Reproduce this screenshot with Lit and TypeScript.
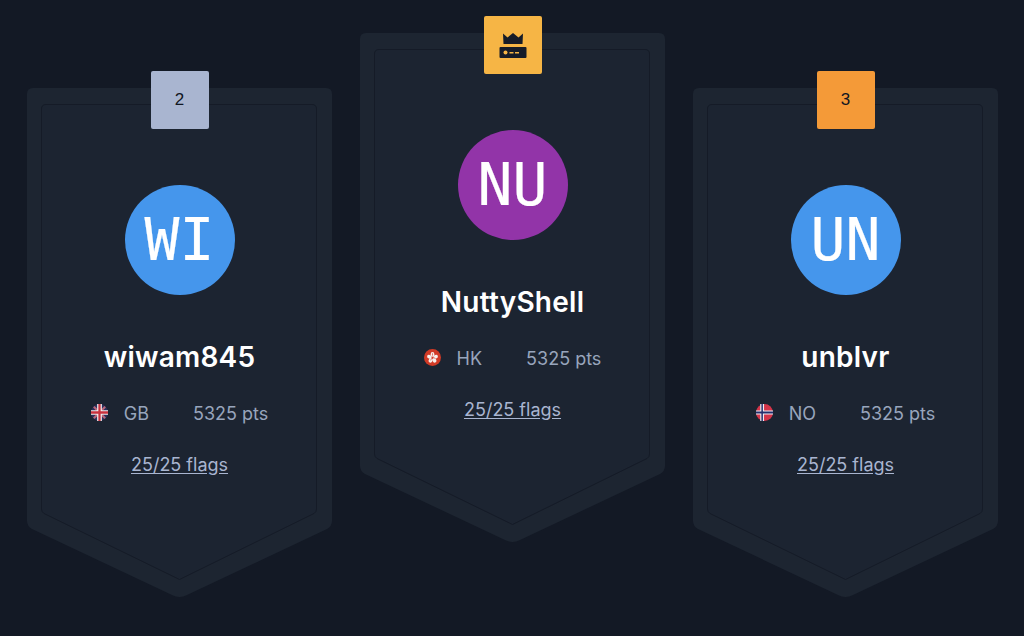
import { LitElement, html, css, svg } from "lit";
import { customElement, property } from "lit/decorators.js";

const flags: Record<string, unknown> = {
  GB: svg`<circle cx="9" cy="9" r="9" fill="#2a2f5c"/>
    <path d="M3 3 L15 15 M15 3 L3 15" stroke="#b9687a" stroke-width="2.200"/>
    <path d="M6.500 0 H11.500 V6.500 H18 V11.500 H11.500 V18 H6.500 V11.500 H0 V6.500 H6.500 Z" fill="#f2eef0"/>
    <path d="M7.800 0 H10.200 V7.800 H18 V10.200 H10.200 V18 H7.800 V10.200 H0 V7.800 H7.800 Z" fill="#c8313e"/>`,
  HK: svg`<circle cx="9" cy="9" r="9" fill="#d13a26"/>
    <g fill="#f7efec">
      <ellipse cx="9" cy="5.700" rx="2" ry="2.500"/>
      <ellipse cx="12.300" cy="8.200" rx="2" ry="2.500" transform="rotate(72 12.300 8.200)"/>
      <ellipse cx="11" cy="12" rx="2" ry="2.500" transform="rotate(144 11 12)"/>
      <ellipse cx="7" cy="12" rx="2" ry="2.500" transform="rotate(216 7 12)"/>
      <ellipse cx="5.700" cy="8.200" rx="2" ry="2.500" transform="rotate(288 5.700 8.200)"/>
    </g>
    <path d="M9 4.500 V7 M12 10 L10 9 M7 12 L8 10" stroke="#d13a26" stroke-width=".7" fill="none"/>`,
  NO: svg`<circle cx="9" cy="9" r="9" fill="#d5354a"/>
    <path d="M4.500 0 H8.500 V6.800 H18 V11.200 H8.500 V18 H4.500 V11.200 H0 V6.800 H4.500 Z" fill="#f0eef2"/>
    <path d="M5.700 0 H7.300 V8 H18 V10 H7.300 V18 H5.700 V10 H0 V8 H5.700 Z" fill="#25306e"/>`,
};

@customElement("podium-card")
class PodiumCard extends LitElement {
  @property() rank = "";
  @property() initials = "";
  @property() name = "";
  @property() code = "";
  @property() color = "";
  @property() badge = "";

  static styles = css`
    :host { display: block; position: relative; flex: 1 1 0; height: 509px; }
    .shape { position: absolute; inset: 0; width: 100%; height: 100%; }
    .badge {
      position: absolute; top: -17.500px; left: 50%; margin-left: -29px;
      width: 58px; height: 58.500px; border-radius: 2px;
      display: flex; align-items: center; justify-content: center;
      font: 400 17px "Liberation Sans", sans-serif; color: #111722;
    }
    .body {
      position: relative; display: flex; flex-direction: column; align-items: center;
      padding-top: 97px;
    }
    .avatar {
      width: 110px; height: 110px; border-radius: 50%;
      display: flex; align-items: center; justify-content: center;
      color: #fff; font: 400 58px "DejaVu Sans Mono", monospace;
      -webkit-text-stroke: 0.2px #fff;
    }
    .name {
      margin-top: 44px; font: 600 28px/36px "Inter", sans-serif; color: #fff;
      letter-spacing: 0.25px;
    }
    .stats {
      margin-top: 27px; display: flex; align-items: center;
      font: 400 18px/24px "Inter", sans-serif; color: #98a5bc;
    }
    .flag { width: 17px; height: 17px; margin-right: 16px; margin-top: -3px; flex: none; }
    .pts { margin-left: 44px; }
    .flags {
      margin-top: 27px; font: 400 18px/24px "Inter", sans-serif; color: #a9b5d0;
      text-decoration: underline; text-underline-offset: 2px;
    }
    .crown { width: 30px; height: 28px; display: block; margin-left: 1px; margin-top: 2px; }
  `;

  render() {
    return html`
      <svg class="shape" viewBox="0 0 305 509" preserveAspectRatio="none" aria-hidden="true">
        <path d="M6 0 H299 Q305 0 305 6 V433 Q305 438 300 441 L160 507 Q152.500 511 145 507 L5 441 Q0 438 0 433 V6 Q0 0 6 0 Z" fill="#1d2531"/>
        <path d="M19 16.500 H285 Q289.500 16.500 289.500 21 V421 Q289.500 424 287 425.500 L152.500 491.500 L17 425.500 Q14.500 424 14.500 421 V21 Q14.500 16.500 19 16.500 Z" fill="#1c2431" stroke="#151b27" stroke-width="1"/>
      </svg>
      <div class="badge" style="background:${this.badge}">
        ${this.rank === "1"
          ? html`<svg class="crown" viewBox="0 0 30 28" aria-hidden="true">
              <path d="M5 1.500 L9.500 5.500 L15 1 L20.500 5.500 L25 1.500 L24.500 12 H5.500 Z" fill="#161c28"/>
              <rect x="1.500" y="15" width="27" height="11" rx="1" fill="#161c28"/>
              <circle cx="7.500" cy="20.500" r="2" fill="#f6b545"/>
              <rect x="11.500" y="20" width="4" height="1.500" fill="#f6b545"/>
              <rect x="17" y="20" width="4" height="1.500" fill="#f6b545"/>
            </svg>`
          : this.rank}
      </div>
      <div class="body">
        <div class="avatar" style="background:${this.color}">${this.initials}</div>
        <div class="name">${this.name}</div>
        <div class="stats">
          <svg class="flag" viewBox="0 0 18 18" aria-hidden="true">${flags[this.code]}</svg>
          <span>${this.code}</span>
          <span class="pts">5325 pts</span>
        </div>
        <div class="flags">25/25 flags</div>
      </div>
    `;
  }
}

@customElement("app-root")
class AppRoot extends LitElement {
  static styles = css`
    :host { display: block; height: 636px; background: #131925; overflow: hidden; }
    .row { display: flex; gap: 28px; padding: 33px 26px 0 27px; align-items: flex-start; }
    .side { margin-top: 55px; }
  `;
  render() {
    return html`
      <div class="row">
        <podium-card class="side" rank="2" initials="WI" name="wiwam845" code="GB" color="#4596ec" badge="#a9b5d0"></podium-card>
        <podium-card rank="1" initials="NU" name="NuttyShell" code="HK" color="#9234a8" badge="#f6b545"></podium-card>
        <podium-card class="side" rank="3" initials="UN" name="unblvr" code="NO" color="#4596ec" badge="#f49a38"></podium-card>
      </div>
    `;
  }
}
